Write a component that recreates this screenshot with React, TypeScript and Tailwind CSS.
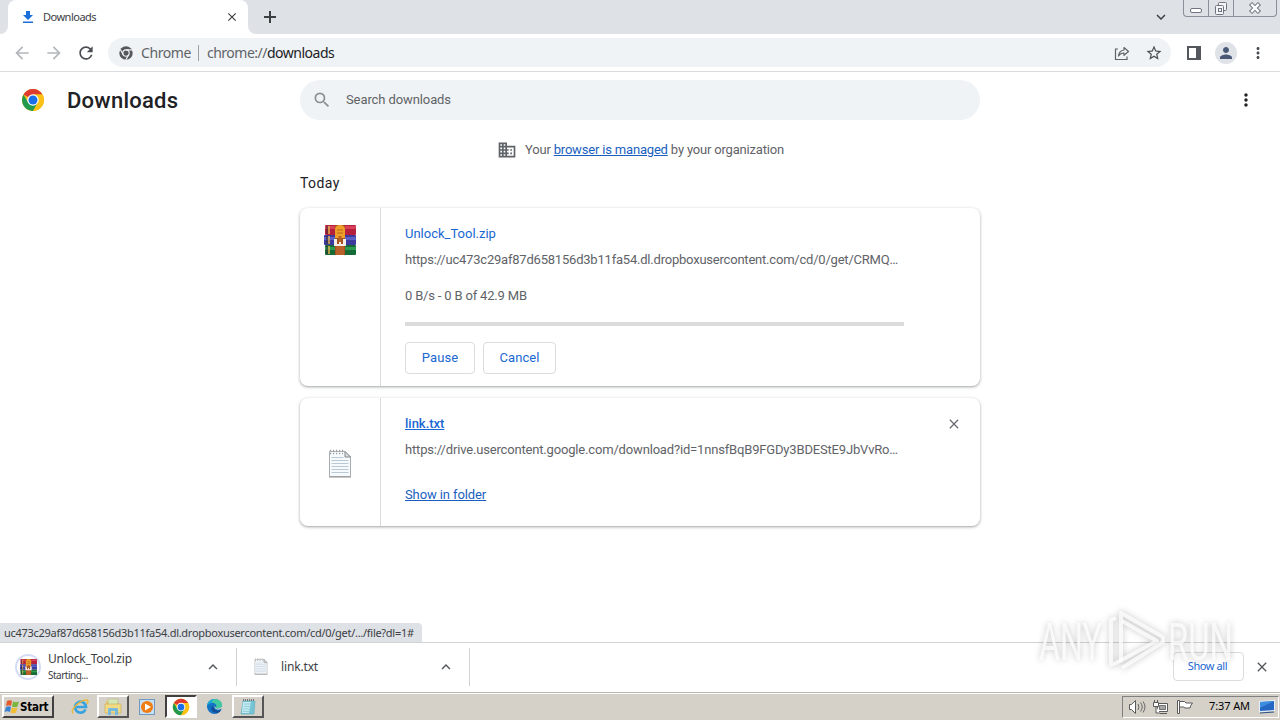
import type { ReactNode } from "react";
import {
  MdArrowBack,
  MdArrowForward,
  MdClose,
  MdDomain,
  MdExpandLess,
  MdExpandMore,
  MdMoreVert,
  MdPerson,
  MdRefresh,
  MdSearch,
  MdStarBorder,
} from "react-icons/md";

function ChromeLogo({ className }: { className: string }) {
  return (
    <svg viewBox="0 0 48 48" className={className}>
      <circle cx="24" cy="24" r="22" fill="#fbc116" />
      <path d="M24 24 L5 13 A22 22 0 0 1 43 13 L24 13 Z" fill="#de3b30" />
      <path d="M5 13 A22 22 0 0 0 24 46 L33.5 29.5 L24 24 L14.5 29.5 Z" fill="#229a4d" />
      <path d="M24 46 A22 22 0 0 0 43 13 L24 13 L33.8 29.5 Z" fill="#fbc116" />
      <circle cx="24" cy="24" r="11.5" fill="#fff" />
      <circle cx="24" cy="24" r="9" fill="#1a6fe8" />
    </svg>
  );
}

function ChromeMono() {
  return (
    <svg viewBox="0 0 48 48" className="size-[14px]">
      <circle cx="24" cy="24" r="23" fill="#54575b" />
      <g stroke="#f1f3f4" strokeWidth="4" fill="none">
        <circle cx="24" cy="24" r="11" />
        <path d="M24 13 H46 M14.5 29.5 L4 11 M33.5 29.5 L23 48" />
      </g>
    </svg>
  );
}

function RarIcon({ className }: { className: string }) {
  return (
    <svg viewBox="0 0 32 30" className={className}>
      <rect x="1" y="0" width="31" height="10" rx="1" fill="#b5203c" />
      <rect x="1" y="1" width="31" height="3" fill="#d8405a" />
      <rect x="0" y="10" width="32" height="10" rx="1" fill="#3c3a9c" />
      <rect x="0" y="12" width="32" height="3" fill="#5a61c4" />
      <rect x="1" y="20" width="31" height="10" rx="1" fill="#156b35" />
      <rect x="1" y="22" width="31" height="3" fill="#2e9a50" />
      <path d="M3 1v8M3 11v8M3 21v8" stroke="#3a2a30" strokeWidth="1" />
      <path d="M5 1v8M5 11v8M5 21v8" stroke="#e2b04c" strokeWidth="1.5" />
      <rect x="11" y="0" width="10" height="30" fill="#a9501f" />
      <rect x="12" y="20" width="8" height="10" fill="#b9602b" />
      <path d="M11 13V4Q12 0 16 0T21 4V13Z" fill="#efa02a" />
      <path d="M13 5h6M13 8h6" stroke="#b7641a" strokeWidth="1.2" />
      <path d="M10 14h3v5h2v-5h2v5h2v-5h3v7H10Z" fill="#f5eee6" />
      <rect x="14.5" y="11" width="3" height="6" fill="#b36024" />
    </svg>
  );
}

function TextFileIcon({ className }: { className: string }) {
  return (
    <svg viewBox="0 0 24 29" className={className}>
      <path d="M1.5 2.5H17L22.5 8V27.5H1.5Z" fill="#f7fafc" stroke="#a9adb0" />
      <path d="M17 2.5V8H22.5Z" fill="#dcdfe2" stroke="#85898c" />
      <path d="M1 28h22" stroke="#8e9295" />
      <path
        d="M3.5 8.5h12M3.5 11.5h17M3.5 14.5h17M3.5 17.5h17M3.5 20.5h17M3.5 23.5h17"
        stroke="#b9cad6"
      />
      <path d="M2 1.5h15M2 4.5h13" stroke="#9c9fa2" strokeWidth="1.5" strokeDasharray="1.2 1.8" />
    </svg>
  );
}

function WindowButtons() {
  return (
    <div className="flex h-[17px] w-[94px] rounded-b-[4px] border border-t-0 border-[#8b8f99] text-[#6f7480]">
      <div className="flex w-[25px] justify-center border-r border-[#8b8f99]">
        <svg viewBox="0 0 24 16" className="h-4 w-6">
          <rect x="6.5" y="8.5" width="11" height="4" rx="1.5" fill="#fff" stroke="currentColor" />
        </svg>
      </div>
      <div className="flex w-[25px] justify-center border-r border-[#8b8f99]">
        <svg viewBox="0 0 24 16" className="h-4 w-6" fill="#f4f5f7" stroke="currentColor">
          <rect x="9.5" y="2.5" width="8" height="8" rx="1" />
          <rect x="6.5" y="5.5" width="8" height="9" rx="1" />
          <rect x="9.5" y="8.5" width="3" height="3" />
        </svg>
      </div>
      <div className="flex flex-1 justify-center">
        <svg viewBox="0 0 24 16" className="h-4 w-6">
          <path d="M7.5 3.5 L16.5 12.5 M16.5 3.5 L7.5 12.5" stroke="#6f7480" strokeWidth="4.4" />
          <path d="M8.2 4.2 L15.8 11.8 M15.8 4.2 L8.2 11.8" stroke="#fff" strokeWidth="2.4" />
        </svg>
      </div>
    </div>
  );
}

function TabStrip() {
  return (
    <div className="flex h-[34px] bg-white">
      <div className="w-2 rounded-br-lg bg-[#dee1e6]" />
      <div className="flex bg-[#dee1e6]">
        <div className="flex w-60 items-center rounded-t-lg bg-white pl-[14px] pr-[9px]">
          <svg viewBox="0 0 12 14" className="h-[14px] w-3 fill-[#1a6fdb]">
            <path d="M4 1h4v4h3L6 10 1 5h3zM1 11.5h10V13H1z" />
          </svg>
          <span className="ml-[9px] font-['Noto_Sans'] text-[11px] tracking-[-0.5px] text-[#3c4043]">
            Downloads
          </span>
          <MdClose className="ml-auto size-[14px] text-[#3c4043]" />
        </div>
      </div>
      <div className="flex flex-1 rounded-bl-lg bg-[#dee1e6]">
        <svg viewBox="0 0 12 12" className="ml-4 mt-[11px] size-3 stroke-[#3c4043] stroke-2">
          <path d="M6 0v12M0 6h12" />
        </svg>
        <MdExpandMore className="ml-auto mr-[13px] mt-2 size-[18px] text-[#3c4043]" />
        <WindowButtons />
        <div className="w-[3px]" />
      </div>
    </div>
  );
}

function Toolbar() {
  return (
    <div className="flex h-[38px] items-center border-b border-[#dadce0] bg-white pl-3 pr-[13px]">
      <MdArrowBack className="size-5 text-[#b4b7bb]" />
      <MdArrowForward className="ml-3 size-5 text-[#b4b7bb]" />
      <MdRefresh className="ml-3 size-5 text-[#4a4d51]" />
      <div className="ml-3 flex h-[29px] w-[1063px] items-center rounded-full bg-[#f0f3f5] pl-[11px] pr-2 font-['Noto_Sans'] text-[14px] text-[#5f6368]">
        <ChromeMono />
        <span className="ml-2 w-[50px] tracking-[-0.4px]">Chrome</span>
        <span className="ml-[7px] h-4 w-px bg-[#9aa0a6]" />
        <span className="ml-2 tracking-[-0.5px]">
          chrome://<span className="text-[#202124]">downloads</span>
        </span>
        <svg viewBox="0 0 16 16" className="ml-auto size-4" fill="none" stroke="#5f6368" strokeWidth="1.2">
          <path d="M4 4H1.5V14.5H13V11.5" />
          <path d="M10 2.5 14.5 6.5 10 10.3V8Q6.5 7.8 4.5 11 5 5.6 10 5Z" strokeLinejoin="round" />
        </svg>
        <MdStarBorder className="ml-[15px] size-[18px] text-[#4a4d51]" />
      </div>
      <svg viewBox="0 0 14 14" className="ml-4 size-[14px]">
        <path d="M1 1H13V13H1Z" fill="none" stroke="#54575b" strokeWidth="2" />
        <path d="M9 1h5v12H9z" fill="#54575b" />
      </svg>
      <div className="ml-[14px] flex size-[22px] items-center justify-center rounded-full bg-[#dfe2e7]">
        <MdPerson className="size-[18px] text-[#4a5878]" />
      </div>
      <MdMoreVert className="ml-3 size-[18px] text-[#4a4d51]" />
    </div>
  );
}

function DownloadCard({ icon, children }: { icon: ReactNode; children: ReactNode }) {
  return (
    <div className="flex rounded-lg bg-white shadow-[0_1px_2px_rgba(60,64,67,0.3),0_1px_3px_1px_rgba(60,64,67,0.15)]">
      <div className="flex w-[81px] justify-center border-r border-[#dadce0]">{icon}</div>
      <div className="flex-1 pl-6 pt-4">{children}</div>
    </div>
  );
}

function ActionButton({ label, width }: { label: string; width: string }) {
  return (
    <button
      className={`${width} h-8 rounded border border-[#dadce0] text-[13px] tracking-[0.1px] text-[#1967d2]`}
    >
      {label}
    </button>
  );
}

function DownloadsPage() {
  return (
    <main className="relative h-[570px] bg-white font-['Roboto'] text-[13px] text-[#5f6368]">
      <div className="flex h-14 items-center">
        <ChromeLogo className="ml-[21px] size-6" />
        <h1 className="ml-[22px] w-[233px] text-[22px] font-medium tracking-[0.25px] text-[#202124]">
          Downloads
        </h1>
        <div className="flex h-10 w-[680px] items-center rounded-full bg-[#f0f3f5] pl-3">
          <MdSearch className="size-5 text-[#8b8f94]" />
          <span className="ml-[14px] tracking-[-0.1px]">Search downloads</span>
        </div>
        <MdMoreVert className="ml-auto mr-6 size-5 text-[#202124]" />
      </div>

      <div className="flex h-[44px] items-center justify-center pl-px">
        <MdDomain className="mr-2 size-5 text-[#5f6368]" />
        <span className="tracking-[-0.18px]">
          Your <span className="text-[#1a5fc0] underline">browser is managed</span> by your organization
        </span>
      </div>

      <div className="mx-auto w-[680px]">
        <h2 className="h-9 text-[14px] leading-[22px] tracking-[0.4px] text-[#202124]">Today</h2>
        <div className="flex flex-col gap-3">
          <DownloadCard icon={<RarIcon className="mt-[17px] h-[30px] w-8" />}>
            <div className="h-[162px]">
              <p className="h-[26px] leading-5 text-[#1967d2]">Unlock_Tool.zip</p>
              <p className="h-9 leading-5 tracking-[-0.21px]">
                https://uc473c29af87d658156d3b11fa54.dl.dropboxusercontent.com/cd/0/get/CRMQ…
              </p>
              <p className="h-9 leading-5 tracking-[-0.18px]">0 B/s - 0 B of 42.9 MB</p>
              <div className="h-1 w-[499px] bg-[#dcdcdc]" />
              <div className="mt-4 flex gap-2">
                <ActionButton label="Pause" width="w-[70px]" />
                <ActionButton label="Cancel" width="w-[73px]" />
              </div>
            </div>
          </DownloadCard>

          <DownloadCard icon={<TextFileIcon className="mt-[51px] h-[29px] w-6" />}>
            <div className="flex h-[112px] justify-between">
              <div>
                <p className="h-[26px] leading-5 font-medium text-[#1967d2] underline">link.txt</p>
                <p className="h-[45px] leading-5 tracking-[-0.17px]">
                  https://drive.usercontent.google.com/download?id=1nnsfBqB9FGDy3BDEStE9JbVvRo…
                </p>
                <p className="leading-5 tracking-[-0.1px] text-[#1a5fc0] underline">Show in folder</p>
              </div>
              <MdClose className="mr-[18px] mt-[2px] size-4 text-[#6b6f74]" />
            </div>
          </DownloadCard>
        </div>
      </div>

      <div className="absolute bottom-0 left-0 flex h-[19px] w-[422px] items-center rounded-tr bg-[#dee1e6] pl-1 pt-px font-['Noto_Sans'] text-[11px] tracking-[-0.28px] whitespace-nowrap text-[#3c4043]">
        uc473c29af87d658156d3b11fa54.dl.dropboxusercontent.com/cd/0/get/.../file?dl=1#
      </div>
    </main>
  );
}

function DownloadShelf() {
  return (
    <div className="flex h-[50px] items-center border-t border-[#d0d2d5] bg-white pb-[2px] font-['Noto_Sans'] text-[#3c4043]">
      <div className="ml-[15px] flex size-[26px] items-center justify-center rounded-full border-2 border-[#d3dcf5]">
        <RarIcon className="h-4 w-[17px]" />
      </div>
      <div className="ml-[7px] w-[156px]">
        <p className="text-[12px] leading-[17px] tracking-[-0.2px]">Unlock_Tool.zip</p>
        <p className="text-[10px] leading-[17px] tracking-[-0.5px]">Starting...</p>
      </div>
      <MdExpandLess className="size-[18px] text-[#54575b]" />
      <div className="ml-[14px] h-[38px] w-px bg-[#d0d2d5]" />
      <TextFileIcon className="ml-[17px] h-[17px] w-[14px]" />
      <p className="ml-[13px] w-[156px] text-[12px] tracking-[-0.15px]">link.txt</p>
      <MdExpandLess className="size-[18px] text-[#54575b]" />
      <div className="ml-[14px] h-[38px] w-px bg-[#d0d2d5]" />
      <button className="ml-auto h-[29px] w-[71px] rounded border border-[#dadce0] pr-[2px] text-[11px] tracking-[-0.4px] text-[#1967d2]">
        Show all
      </button>
      <MdClose className="mx-[10px] size-4 text-[#54575b]" />
    </div>
  );
}

function Watermark() {
  return (
    <svg
      viewBox="0 0 200 70"
      className="pointer-events-none absolute left-[1036px] top-[607px] h-[70px] w-[200px] drop-shadow-[0_0_3px_rgba(0,0,0,0.3)]"
    >
      <g fill="#fff" fillOpacity="0.75" fontFamily="Roboto" fontSize="52">
        <text x="3" y="53" textLength="63" lengthAdjust="spacingAndGlyphs">
          ANY
        </text>
        <text x="132" y="53" textLength="65" lengthAdjust="spacingAndGlyphs">
          RUN
        </text>
      </g>
      <g fill="none" stroke="#fff" strokeOpacity="0.75" strokeWidth="4" strokeLinejoin="round">
        <path d="M85 55V6L127 30V35L86 61" />
        <path d="M80 11 75 13V58L80 56 121 34 86 14" />
      </g>
    </svg>
  );
}

function FolderIcon() {
  return (
    <svg viewBox="0 0 18 18" className="size-[18px]">
      <path d="M2 3h5l1 2h7v9H2z" fill="#e8c765" />
      <path d="M4 1h10v6H4z" fill="#d3e8b6" stroke="#b8b184" strokeWidth=".6" />
      <path d="M1 6h16v9H1z" fill="#f1da85" stroke="#c9a84f" strokeWidth=".6" />
      <path d="M4 17V11q0-1 1-1h8q1 0 1 1v6h-3v-4H7v4z" fill="#79b9dc" />
    </svg>
  );
}

function IeIcon() {
  return (
    <svg viewBox="0 0 18 18" className="size-[18px]" fill="none">
      <path d="M14.5 11.5A5.5 5.5 0 1 1 15 9H5" stroke="#37a3df" strokeWidth="2.7" />
      <path d="M2 15.5C-1 12 8 2 16 2q2 1 0 4" stroke="#e9b93d" strokeWidth="1.4" />
    </svg>
  );
}

function PlayerIcon() {
  return (
    <svg viewBox="0 0 16 16" className="size-4">
      <rect x=".5" y=".5" width="15" height="15" fill="#c9def0" stroke="#6e9bc5" />
      <circle cx="8" cy="8" r="6" fill="#ef7d13" />
      <path d="M6 4.5 12 8 6 11.5Z" fill="#fff" />
    </svg>
  );
}

function EdgeIcon() {
  return (
    <svg viewBox="0 0 18 18" className="size-[17px]">
      <circle cx="9" cy="9" r="8" fill="#1272c4" />
      <path d="M1 8Q3 1 9 1q8 0 8 7 0 3.5-5 3.5-2 0-2-1 1-1 1-2.5Q10 5 6.5 5 3 5 1 8Z" fill="#42c9a0" />
      <path d="M1 8Q3 1 9 1 5 3 6.5 5 3 5 1 8Z" fill="#1ba6dd" />
      <path d="M6 9q-2 6 6 7 2 0 4-3-3 1-5.5 0T8 9Z" fill="#124b96" />
      <path d="M9 8.5q-.5 3.5 4 4l4-1.5v-2q-2 2.8-6 2Z" fill="#d5d0c8" />
    </svg>
  );
}

function NotepadIcon() {
  return (
    <svg viewBox="0 0 18 18" className="size-[18px]">
      <path d="M4 3h12l-1 13H2z" fill="#74c3d5" stroke="#6fb3c3" strokeWidth=".7" />
      <path d="M4 4h8L10 15H3z" fill="#c3eaf0" />
      <path d="M5 6h9M5 8.5h9M4.5 11h9M4 13.5h9" stroke="#7fc4d2" strokeWidth=".7" />
      <path d="M4 2h12" stroke="#555" strokeWidth="1.5" strokeDasharray="1 1" />
    </svg>
  );
}

function TaskButton({ active = false, children }: { active?: boolean; children: ReactNode }) {
  return (
    <div
      className={
        active
          ? "flex h-[23px] w-8 items-center justify-center border-2 border-t-[#404040] border-l-[#404040] border-b-white border-r-white bg-white"
          : "flex h-[23px] w-8 items-center justify-center border-2 border-t-white border-l-white border-b-[#555] border-r-[#555] bg-[#d5d0c8]"
      }
    >
      {children}
    </div>
  );
}

function Taskbar() {
  return (
    <div className="flex h-7 items-center border-t border-[#b9b6b0] bg-[#d5d0c8] shadow-[inset_0_1px_0_#fff]">
      <div className="ml-[2px] flex h-[23px] w-[52px] items-center border-2 border-t-white border-l-white border-b-[#404040] border-r-[#404040]">
        <svg viewBox="0 0 16 16" className="size-4 shrink-0">
          <path d="M3 2q3-1.5 5 0L7 7Q5 5.5 2 7Z" fill="#e5592c" />
          <path d="M9 2.5q3 1.5 6 0L13.5 7.5Q11 9 8 7.5Z" fill="#7ab53c" />
          <path d="M2 8q3-1.5 5 0L6 13Q3 11.5 .5 13Z" fill="#3b84d4" />
          <path d="M8 8.5q3 1.5 5.5 0L12 13.5Q9 15 6.5 13.5Z" fill="#f3bd31" />
        </svg>
        <span className="pt-[3px] font-['DejaVu_Sans_Condensed','DejaVu_Sans'] text-[11.5px] font-bold tracking-[-0.25px] text-black">
          Start
        </span>
      </div>
      <div className="ml-[17px] flex items-center">
        <IeIcon />
        <div className="ml-2">
          <TaskButton>
            <FolderIcon />
          </TaskButton>
        </div>
        <div className="mx-[10px]">
          <PlayerIcon />
        </div>
        <TaskButton active>
          <ChromeLogo className="size-[18px]" />
        </TaskButton>
        <div className="mx-[9px]">
          <EdgeIcon />
        </div>
        <TaskButton>
          <NotepadIcon />
        </TaskButton>
      </div>
      <div className="ml-auto mr-px flex h-[22px] w-[157px] items-center border border-t-[#808080] border-l-[#808080] border-b-white border-r-white pl-[6px]">
        <svg viewBox="0 0 66 16" className="h-4 w-[66px]" fill="none" stroke="#5a5a5a">
          <path d="M.5 5.5h2l4-4v13l-4-4h-2z" fill="#fff" />
          <path d="M9 5q2 3 0 6M11.5 3.5q3.5 4.5 0 9M14 2.500q4 5.500 0 11" strokeWidth=".9" />
          <path d="M28.500 4.500h10v8h-10z" fill="#fff" />
          <path d="M30.500 6.500h6v4h-6z" fill="#a5a5a5" strokeWidth=".8" />
          <path d="M31 14.500h7" />
          <path d="M25.500 1v3M28.500 1v3M24.500 3.500h5v4h-5zM27 7.500v6.500h4" fill="#fff" />
          <path d="M48.500 1.500h2v13h-2z" fill="#fff" />
          <path d="M50.500 2.500h5l1.500 1.500h6.500q-2 2-2.500 5h-5L54.500 8h-4z" fill="#fff" />
        </svg>
        <span className="ml-[14px] w-[42px] whitespace-nowrap font-['Noto_Sans'] text-[11px] tracking-[-0.1px] text-black">
          7:37 AM
        </span>
        <svg viewBox="0 0 16 16" className="ml-2 size-4">
          <path d="M0 2 16 1V12L0 13Z" fill="#e6f0fa" />
          <path d="M1 3 15 2V11L1 12Z" fill="#2568c4" />
          <path d="M1 3 15 2 1 9Z" fill="#3c8de0" />
          <path d="M1 14 15 13" stroke="#2a4c80" />
        </svg>
      </div>
    </div>
  );
}

export default function App() {
  return (
    <div className="relative flex h-[720px] w-[1280px] flex-col overflow-hidden bg-white">
      <TabStrip />
      <Toolbar />
      <DownloadsPage />
      <DownloadShelf />
      <Taskbar />
      <Watermark />
    </div>
  );
}
